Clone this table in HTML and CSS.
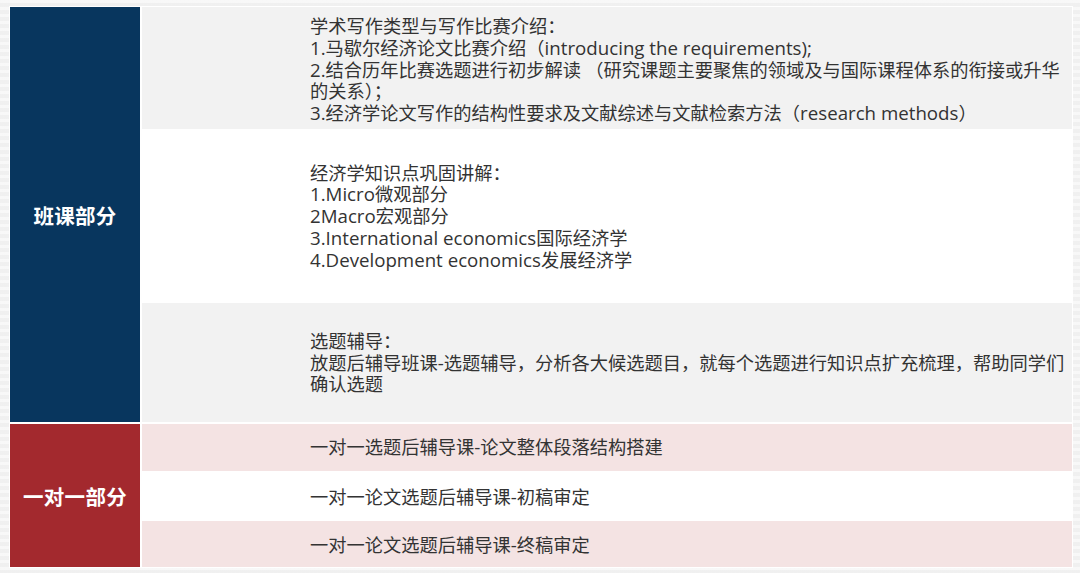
FILE: index.html
```html
<!DOCTYPE html>
<html lang="zh-CN">
<head>
<meta charset="utf-8">
<title>课程安排</title>
<link rel="stylesheet" href="styles.css">
</head>
<body>
<div class="page">
  <div class="table">
    <section class="group">
      <div class="label label-navy">班课部分</div>
      <div class="rows">
        <div class="row row-gray row-h1">
          <p>学术写作类型与写作比赛介绍：<br><span class="en">1.</span>马歇尔经济论文比赛介绍（<span class="en">introducing the requirements);</span><br><span class="en">2.</span>结合历年比赛选题进行初步解读 （研究课题主要聚焦的领域及与国际课程体系的衔接或升华的关系）；<br><span class="en">3.</span>经济学论文写作的结构性要求及文献综述与文献检索方法（<span class="en">research methods</span>）</p>
        </div>
        <div class="row row-white row-h2">
          <p>经济学知识点巩固讲解：<br><span class="en">1.Micro</span>微观部分<br><span class="en">2Macro</span>宏观部分<br><span class="en">3.International economics</span>国际经济学<br><span class="en">4.Development economics</span>发展经济学</p>
        </div>
        <div class="row row-gray row-h3">
          <p>选题辅导：<br>放题后辅导班课<span class="en">-</span>选题辅导，分析各大候选题目，就每个选题进行知识点扩充梳理，帮助同学们确认选题</p>
        </div>
      </div>
    </section>
    <section class="group">
      <div class="label label-red">一对一部分</div>
      <div class="rows rows-tight">
        <div class="row row-pink row-s1"><p>一对一选题后辅导课<span class="en">-</span>论文整体段落结构搭建</p></div>
        <div class="row row-white row-s2"><p>一对一论文选题后辅导课<span class="en">-</span>初稿审定</p></div>
        <div class="row row-pink row-s3"><p>一对一论文选题后辅导课<span class="en">-</span>终稿审定</p></div>
      </div>
    </section>
  </div>
</div>
</body>
</html>
```

FILE: styles.css
```css
html, body {
  margin: 0;
  padding: 0;
}
body {
  width: 1080px;
  height: 573px;
  overflow: hidden;
  background: #f4f4f4;
  background-image: repeating-linear-gradient(180deg, rgba(255,255,255,0.35) 0 3px, rgba(0,0,0,0.015) 3px 7px);
  font-family: "Noto Sans CJK SC", sans-serif;
  color: #333;
}
.page {
  padding: 6px 7px 5px 9px;
}
.table {
  background: #fff;
  padding: 1px;
  display: flex;
  flex-direction: column;
  gap: 2px;
}
.group {
  display: flex;
  gap: 2px;
}
.label {
  width: 130px;
  flex: none;
  display: flex;
  align-items: center;
  justify-content: center;
  color: #fff;
  font-family: "Noto Sans CJK SC", sans-serif;
  font-weight: 700;
  font-size: 20.5px;
  letter-spacing: 0.3px;
}
.label-navy { background: #08365e; }
.label-red { background: #a3292e; }
.rows {
  flex: 1;
  display: flex;
  flex-direction: column;
  gap: 2px;
}
.rows-tight { gap: 0; }
.row {
  display: flex;
  align-items: center;
  padding: 0 6px 0 168px;
  box-sizing: border-box;
}
.row p {
  margin: 0;
  font-size: 18.25px;
  line-height: 21.8px;
}
.en {
  font-family: "Open Sans", sans-serif;
  font-size: 18.7px;
  line-height: 21.8px;
}
.row-gray { background: #f2f2f2; }
.row-white { background: #fff; }
.row-pink { background: #f4e3e3; }
.row-h1 { height: 122px; padding-top: 3px; }
.row-h2 { height: 170px; }
.row-h3 { height: 119px; }
.row-s1 { height: 47px; padding-bottom: 1px; }
.row-s2 { height: 50px; padding-top: 1px; }
.row-s3 { height: 46px; padding-top: 1px; }
```
